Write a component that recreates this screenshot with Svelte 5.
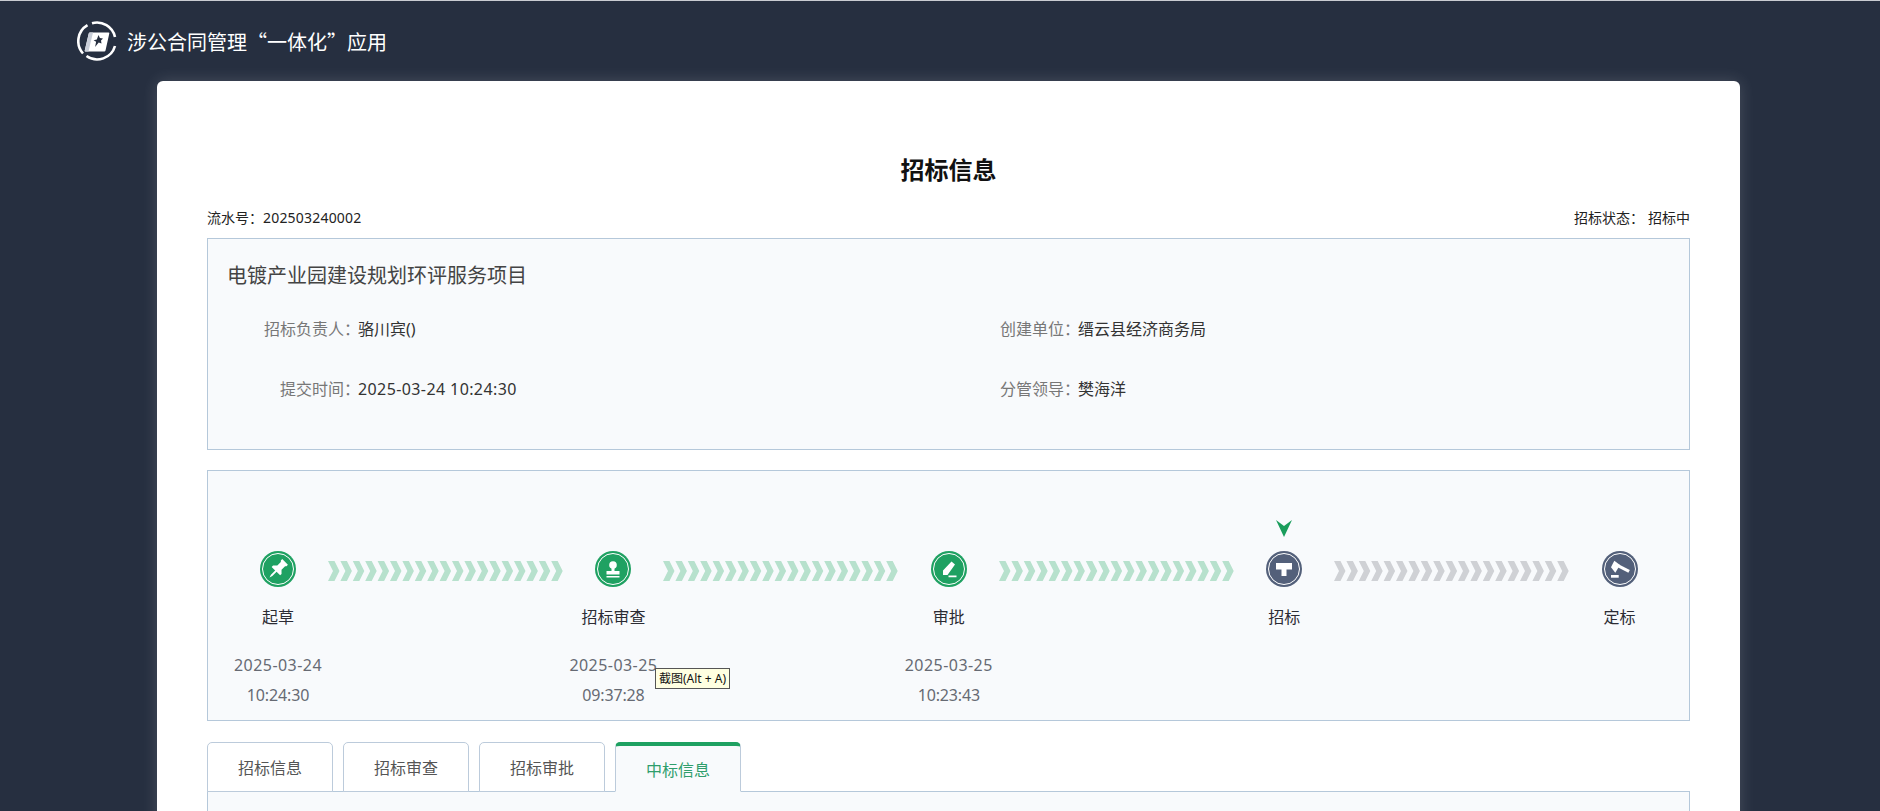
<script>
	const steps = [
		{ name: '起草', date: '2025-03-24', time: '10:24:30', done: true, icon: 'pin' },
		{ name: '招标审查', date: '2025-03-25', time: '09:37:28', done: true, icon: 'stamp' },
		{ name: '审批', date: '2025-03-25', time: '10:23:43', done: true, icon: 'pencil' },
		{ name: '招标', date: '', time: '', done: false, current: true, icon: 'hammer' },
		{ name: '定标', date: '', time: '', done: false, icon: 'gavel' }
	];
	const tabs = ['招标信息', '招标审查', '招标审批', '中标信息'];
	let activeTab = $state(3);
	const chevrons = Array.from({ length: 19 }, (_, i) => i * 12.4);
</script>

<div class="page">
	<header class="topbar">
		<svg class="logo" width="40" height="40" viewBox="0 0 40 40">
			<g fill="none" stroke="#fff" stroke-width="2.600">
				<path d="M6 32.500A18.500 18.500 0 0 1 10.500 4.200" />
				<path d="M15 2.200A18.500 18.500 0 0 1 38 16" />
				<path d="M38 25A18.500 18.500 0 0 1 9.500 35" />
			</g>
			<path d="M13 11.500h18.500q1 0 .8 1l-3.800 17q-.2 1-1.200 1H8.500q-1 0-.8-1l4-17q.2-1 1.300-1z" fill="#fff" />
			<path d="M7.800 29.500l4-17q.2-1 1.200-1h3l-4.500 19h-3q-.9 0-.7-1z" fill="#c9ced8" />
			<path d="M21.500 14l1.400 3 3.100.4-2 2.200 .5 3-2.800-1-3.600 4.400 1-5.200-2.500-1.500 3.200-.8z" fill="#262f40" />
		</svg>
		<span class="apptitle">涉公合同管理“一体化”应用</span>
	</header>

	<main class="card">
		<h1>招标信息</h1>
		<div class="meta">
			<span>流水号：<span class="serial">202503240002</span></span>
			<span>招标状态：<span class="status">招标中</span></span>
		</div>

		<section class="panel info">
			<div class="project">电镀产业园建设规划环评服务项目</div>
			<dl class="fields">
				<div class="field"><dt>招标负责人：</dt><dd>骆川宾()</dd></div>
				<div class="field"><dt>创建单位：</dt><dd>缙云县经济商务局</dd></div>
				<div class="field"><dt>提交时间：</dt><dd class="stamp">2025-03-24 10:24:30</dd></div>
				<div class="field"><dt>分管领导：</dt><dd>樊海洋</dd></div>
			</dl>
		</section>

		<section class="panel flow">
			{#each steps as step, i}
				<div class="step">
					<div class="badge" class:done={step.done}>
						{#if step.current}
							<svg class="marker" width="16" height="17" viewBox="0 0 16 17">
								<path d="M0 0l8 6 8-6-8 17z" fill="#1a9d5c" />
							</svg>
						{/if}
						<svg width="36" height="36" viewBox="0 0 36 36">
							<circle cx="18" cy="18" r="18" class="disc" />
							<circle cx="18" cy="18" r="15.500" fill="none" stroke="#fff" stroke-width="1" />
							<g fill="#fff">
								{#if step.icon === 'pin'}
									<path transform="rotate(45 18 18)" d="M14 8h8v2l-1 1v5l3 3v2h-5v6l-1 3-1-3v-6h-5v-2l3-3v-5l-1-1z" />
								{:else if step.icon === 'stamp'}
									<circle cx="18" cy="14" r="3.800" />
									<path d="M16.500 15h3v5h-3zM11.500 20h13v3.500h-13zM11.500 25h13v1.500h-13z" />
								{:else if step.icon === 'pencil'}
									<path d="M20.500 10.500l3.500 3-7.500 10.500h-4.500v-4.500zM17.500 24.500h8v1.800h-8z" />
								{:else if step.icon === 'hammer'}
									<path d="M10 12h16v6.500h-5.500v6.500h-5v-6.500h-5.500z" />
								{:else}
									<path d="M12.300 9.700l5.700 4.300-4.700 7.700-4.300-5.400z" />
									<path d="M17 13.500l10.800 5.500-1.400 2.800-10.800-5.500z" />
									<path d="M9 24h7.700v2.700h-7.700z" />
								{/if}
							</g>
						</svg>
					</div>
					<div class="name">{step.name}</div>
					<div class="when">
						<div>{step.date}</div>
						<div class="clock">{step.time}</div>
					</div>
				</div>
				{#if i < steps.length - 1}
					<svg class="link" class:done={step.done} width="235.400" height="20" viewBox="0 0 235.400 20">
						{#each chevrons as x}
							<path d="M{x} 0h6.500l5 10-5 10h-6.500l5-10z" />
						{/each}
					</svg>
				{/if}
			{/each}
			<div class="tip">截图(Alt + A)</div>
		</section>

		<nav class="tabs">
			{#each tabs as tab, i}
				<button class="tab" class:active={activeTab === i} onclick={() => (activeTab = i)}>{tab}</button>
			{/each}
		</nav>
		<section class="panel body"></section>
	</main>
</div>

<style>
	:global(body) {
		overflow: hidden;
		background: #262f40;
	}

	.page {
		height: 100vh;
		overflow: hidden;
		background: #262f40;
		border-top: 1px solid #c9ccd2;
		box-sizing: border-box;
		font-family: 'Noto Sans', 'Noto Sans CJK SC', sans-serif;
		color: #333;
	}

	.topbar {
		height: 80px;
		padding-left: 77px;
		display: flex;
		align-items: center;
		gap: 10px;
	}

	.logo {
		margin-top: -1px;
	}

	.apptitle {
		font-family: 'Noto Sans CJK SC', sans-serif;
		font-size: 20px;
		color: #fff;
	}

	.card {
		width: 1483px;
		margin-left: 157px;
		padding: 72px 50px 40px;
		background: #fff;
		border-radius: 6px;
		box-shadow: 0 0 16px rgba(255, 255, 255, 0.16);
	}

	h1 {
		margin: 0;
		font-size: 24px;
		line-height: 32px;
		font-weight: 700;
		text-align: center;
		color: #111;
		font-family: 'Noto Sans CJK SC', sans-serif;
	}

	.meta {
		margin-top: 23px;
		height: 20px;
		line-height: 20px;
		font-size: 14px;
		color: #222;
		display: flex;
		justify-content: space-between;
		margin-bottom: 10px;
	}

	.serial {
		letter-spacing: 0.2px;
	}

	.status {
		margin-left: 4px;
	}

	.panel {
		box-sizing: border-box;
		background: #f8fafc;
		border: 1px solid #b5c8da;
	}

	.info {
		height: 212px;
		padding: 20px 20px 0 19px;
	}

	.project {
		font-size: 20px;
		line-height: 32px;
		color: #444;
		font-family: 'Noto Sans CJK SC', sans-serif;
	}

	.fields {
		margin: 8px 0 0;
		display: grid;
		grid-template-columns: 720px 1fr;
		font-size: 16px;
		line-height: 60px;
	}

	.field {
		display: flex;
	}

	dt {
		width: 133px;
		margin-right: -2px;
		text-align: right;
		color: #777;
		flex: none;
	}

	dd {
		margin: 0;
		color: #333;
	}

	dd.stamp {
		letter-spacing: 0.4px;
	}

	.flow {
		position: relative;
		margin-top: 20px;
		height: 251px;
		padding: 80px 20px 0;
		display: flex;
		align-items: flex-start;
	}

	.step {
		width: 100px;
		flex: none;
		display: flex;
		flex-direction: column;
		align-items: center;
		text-align: center;
	}

	.badge {
		position: relative;
		width: 36px;
		height: 36px;
	}

	.disc {
		fill: #53607a;
	}

	.done .disc {
		fill: #1fa162;
	}

	.marker {
		position: absolute;
		left: 10px;
		top: -31px;
	}

	.name {
		margin-top: 18px;
		font-size: 16px;
		line-height: 24px;
		color: #2c2c34;
	}

	.when {
		margin-top: 20.5px;
		min-height: 60px;
		font-size: 16px;
		line-height: 30px;
		letter-spacing: 0.45px;
		color: #666a73;
		white-space: nowrap;
	}

	.clock {
		letter-spacing: -0.15px;
	}

	.link {
		flex: none;
		margin-top: 10px;
		fill: #cfd1d5;
	}

	.link.done {
		fill: #b7e1cd;
	}

	.tip {
		position: absolute;
		left: 447px;
		top: 197px;
		height: 21px;
		padding: 0 3px;
		box-sizing: border-box;
		line-height: 19px;
		font-size: 12px;
		color: #111;
		background: #ffffe1;
		border: 1px solid #555;
		white-space: nowrap;
	}

	.tabs {
		margin-top: 21px;
		display: flex;
		gap: 10px;
		height: 49px;
		position: relative;
		z-index: 1;
	}

	.tab {
		width: 126px;
		height: 50px;
		box-sizing: border-box;
		padding: 0;
		font: inherit;
		font-size: 16px;
		color: #555;
		background: #fff;
		border: 1px solid #bccbdb;
		border-radius: 5px 5px 0 0;
		cursor: pointer;
	}

	.tab.active {
		background: #f8fafc;
		color: #2f9e6c;
		border-top: 4px solid #1fa162;
		border-bottom-color: #f8fafc;
	}

	.body {
		min-height: 200px;
	}
</style>
